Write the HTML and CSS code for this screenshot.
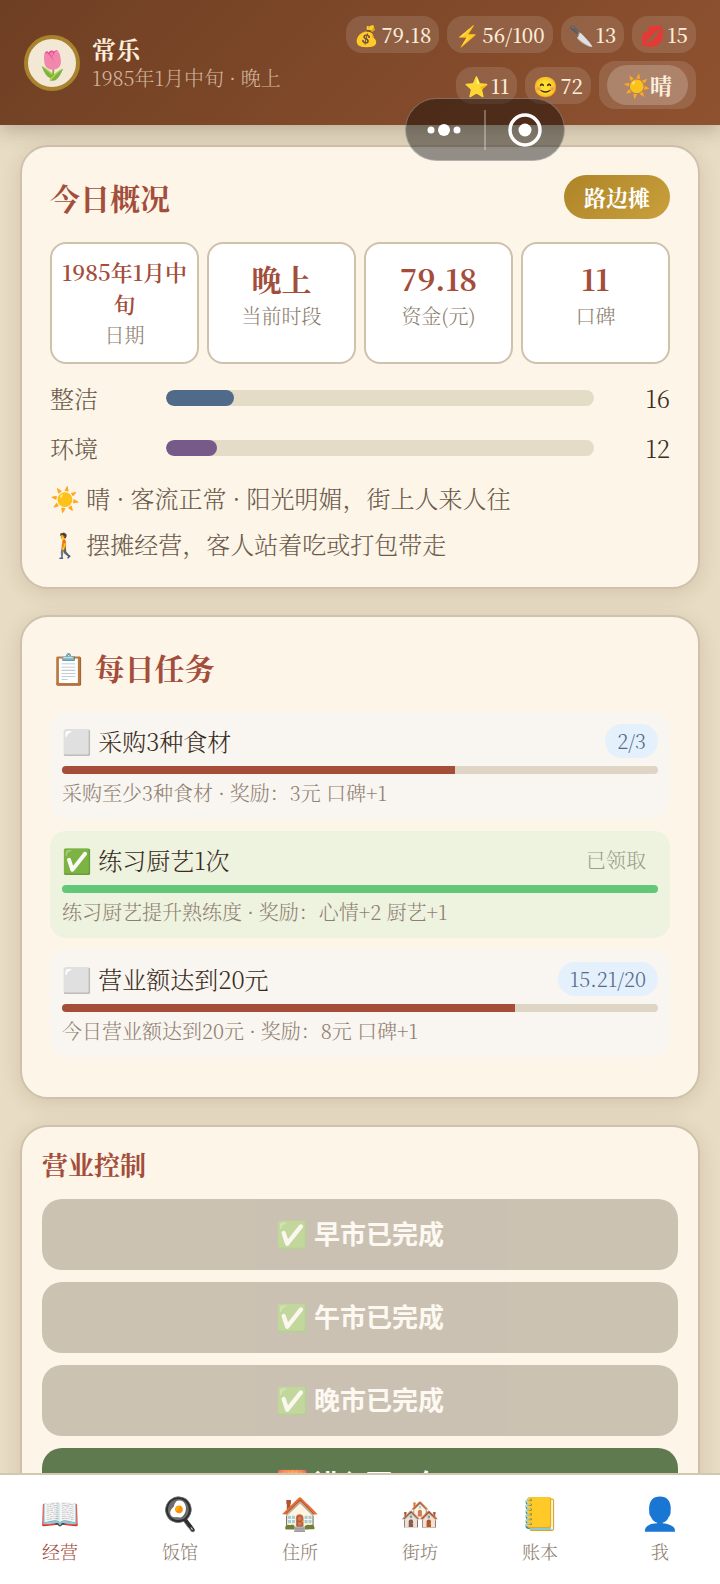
FILE: index.html
```html
<!DOCTYPE html>
<html lang="zh-CN">
<head>
    <meta charset="UTF-8">
    <meta name="viewport" content="width=device-width, initial-scale=1.0">
    <title>今日概况</title>
    <link rel="stylesheet" href="styles.css">
</head>
<body>
    <div class="app">
        <header class="header">
            <div class="avatar">🌷</div>
            <div class="user">
                <div class="user-name">常乐</div>
                <div class="user-date">1985年1月中旬 · 晚上</div>
            </div>
            <div class="status">
                <span class="chip"><span class="icon">💰</span>79.18</span>
                <span class="chip"><span class="icon">⚡</span>56/100</span>
                <span class="chip"><span class="icon">🔪</span>13</span>
                <span class="chip"><span class="icon">💋</span>15</span>
                <span class="chip"><span class="icon">⭐</span>11</span>
                <span class="chip"><span class="icon">😊</span>72</span>
                <span class="chip weather"><span class="weather-tag"><span class="icon">☀️</span>晴</span></span>
            </div>
        </header>

        <main class="main">
            <section class="card">
                <div class="card-head">
                    <h2>今日概况</h2>
                    <span class="badge">路边摊</span>
                </div>
                <div class="stats">
                    <div class="stat">
                        <div class="stat-value small">1985年1月中旬</div>
                        <div class="stat-label">日期</div>
                    </div>
                    <div class="stat">
                        <div class="stat-value">晚上</div>
                        <div class="stat-label">当前时段</div>
                    </div>
                    <div class="stat">
                        <div class="stat-value">79.18</div>
                        <div class="stat-label">资金(元)</div>
                    </div>
                    <div class="stat">
                        <div class="stat-value">11</div>
                        <div class="stat-label">口碑</div>
                    </div>
                </div>
                <div class="meter">
                    <span class="meter-label">整洁</span>
                    <div class="meter-bar"><div class="meter-fill blue" style="width: 16%"></div></div>
                    <span class="meter-num">16</span>
                </div>
                <div class="meter">
                    <span class="meter-label">环境</span>
                    <div class="meter-bar"><div class="meter-fill purple" style="width: 12%"></div></div>
                    <span class="meter-num">12</span>
                </div>
                <p class="note">☀️ 晴 · 客流正常 · 阳光明媚，街上人来人往</p>
                <p class="note">🚶 摆摊经营，客人站着吃或打包带走</p>
            </section>

            <section class="card">
                <div class="card-head">
                    <h2>📋 每日任务</h2>
                </div>
                <div class="task">
                    <div class="task-row">
                        <span>⬜ 采购3种食材</span>
                        <span class="task-tag">2/3</span>
                    </div>
                    <div class="task-bar"><div class="task-fill" style="width: 66%"></div></div>
                    <div class="task-desc">采购至少3种食材 · 奖励：3元 口碑+1</div>
                </div>
                <div class="task done">
                    <div class="task-row">
                        <span>✅ 练习厨艺1次</span>
                        <span class="task-tag">已领取</span>
                    </div>
                    <div class="task-bar"><div class="task-fill" style="width: 100%"></div></div>
                    <div class="task-desc">练习厨艺提升熟练度 · 奖励：心情+2 厨艺+1</div>
                </div>
                <div class="task">
                    <div class="task-row">
                        <span>⬜ 营业额达到20元</span>
                        <span class="task-tag">15.21/20</span>
                    </div>
                    <div class="task-bar"><div class="task-fill" style="width: 76%"></div></div>
                    <div class="task-desc">今日营业额达到20元 · 奖励：8元 口碑+1</div>
                </div>
            </section>

            <section class="card control">
                <h3>营业控制</h3>
                <button class="btn" type="button" disabled>✅ 早市已完成</button>
                <button class="btn" type="button" disabled>✅ 午市已完成</button>
                <button class="btn" type="button" disabled>✅ 晚市已完成</button>
                <button class="btn next" type="button">🌅 进入下一旬</button>
            </section>
        </main>

        <nav class="tabbar">
            <a class="tab active" href="#"><span class="tab-icon">📖</span>经营</a>
            <a class="tab" href="#"><span class="tab-icon">🍳</span>饭馆</a>
            <a class="tab" href="#"><span class="tab-icon">🏠</span>住所</a>
            <a class="tab" href="#"><span class="tab-icon">🏘️</span>街坊</a>
            <a class="tab" href="#"><span class="tab-icon">📒</span>账本</a>
            <a class="tab" href="#"><span class="tab-icon">👤</span>我</a>
        </nav>

        <div class="capsule">
            <button type="button" aria-label="更多">
                <svg width="36" height="36" viewBox="0 0 36 36" fill="#fff">
                    <circle cx="4" cy="18" r="3.5"/>
                    <circle cx="17" cy="18" r="6"/>
                    <circle cx="30" cy="18" r="3.5"/>
                </svg>
            </button>
            <button type="button" aria-label="关闭">
                <svg width="36" height="36" viewBox="0 0 36 36">
                    <circle cx="18" cy="18" r="15" fill="none" stroke="#fff" stroke-width="3.5"/>
                    <circle cx="18" cy="18" r="6.5" fill="#fff"/>
                </svg>
            </button>
        </div>
    </div>
</body>
</html>
```
FILE: styles.css
```css
* {
    margin: 0;
    padding: 0;
    box-sizing: border-box;
}
body {
    font-family: "Noto Serif CJK SC", "Noto Serif SC", "Liberation Serif", "Noto Sans CJK SC", serif;
    font-size: 24px;
    font-weight: 300;
    color: #3a2c22;
    background: #e8dcc4;
}
.app {
    position: relative;
    display: flex;
    flex-direction: column;
    height: 100vh;
    overflow: hidden;
}

/* 顶部状态栏 */
.header {
    position: relative;
    z-index: 1;
    display: flex;
    align-items: center;
    padding: 16px 24px;
    background: linear-gradient(135deg, #6f3f23, #8f5230);
    box-shadow: 0 4px 20px rgba(60, 40, 20, 0.3);
    color: #fbeedb;
}
.avatar {
    display: flex;
    align-items: center;
    justify-content: center;
    width: 56px;
    height: 56px;
    border: 4px solid #a8822c;
    border-radius: 50%;
    background: #f3e8d6;
    font-size: 28px;
}
.user {
    margin-left: 12px;
    white-space: nowrap;
}
.user-name {
    font-weight: bold;
    line-height: 30px;
}
.user-date {
    font-size: 20px;
    line-height: 28px;
    color: #d3b59d;
}
.status {
    flex: 1;
    display: flex;
    flex-wrap: wrap;
    justify-content: flex-end;
    align-items: center;
    gap: 8px;
    margin-left: 20px;
}
.chip {
    display: flex;
    align-items: center;
    gap: 2px;
    padding: 2px 8px;
    border-radius: 16px;
    background: rgba(255, 255, 255, 0.12);
    font-size: 20px;
    font-weight: 500;
    line-height: 33px;
}
.weather {
    padding: 4px 8px;
}
.weather-tag {
    display: flex;
    align-items: center;
    padding: 0 16px;
    border-radius: 20px;
    background: rgba(255, 255, 255, 0.2);
    font-size: 22px;
    font-weight: bold;
    line-height: 40px;
}

/* 卡片 */
.main {
    flex: 1;
    min-height: 0;
    overflow: hidden;
    padding: 20px;
}
.card {
    margin-bottom: 26px;
    padding: 28px;
    border: 2px solid #cfc2ad;
    border-radius: 28px;
    background: #fcf5e8;
    box-shadow: 0 4px 20px rgba(90, 60, 20, 0.14);
}
.card-head {
    display: flex;
    justify-content: space-between;
    align-items: center;
    margin-bottom: 23px;
}
h2 {
    font-size: 30px;
    font-weight: bold;
    line-height: 44px;
    color: #a34d3a;
}
.badge {
    padding: 0 20px;
    border-radius: 22px;
    background: linear-gradient(135deg, #ae8428, #c9a03c);
    color: #fff;
    font-size: 22px;
    font-weight: bold;
    line-height: 44px;
}
.stats {
    display: grid;
    grid-template-columns: repeat(4, 1fr);
    gap: 8px;
    margin-bottom: 15px;
}
.stat {
    padding: 12px 8px;
    border: 2px solid #cfc2ad;
    border-radius: 16px;
    background: #fff;
    text-align: center;
}
.stat-value {
    font-size: 30px;
    font-weight: bold;
    line-height: 45px;
    color: #a34d3a;
}
.stat-value.small {
    font-size: 22px;
    font-weight: 600;
    line-height: 32px;
}
.stat-label {
    font-size: 20px;
    line-height: 30px;
    color: #8a7b6c;
}
.meter {
    display: flex;
    align-items: center;
    gap: 16px;
    margin-bottom: 12px;
    line-height: 38px;
}
.meter-label {
    width: 100px;
    color: #6b5a4b;
}
.meter-bar {
    flex: 1;
    height: 16px;
    border-radius: 8px;
    background: #e5dcc8;
    overflow: hidden;
}
.meter-fill {
    height: 100%;
    border-radius: 8px;
}
.blue {
    background: #506b8a;
}
.purple {
    background: #765b8a;
}
.meter-num {
    width: 60px;
    text-align: right;
}
.note {
    margin-top: 16px;
    line-height: 30px;
    color: #6b5a4b;
}

/* 每日任务 */
.task {
    margin-bottom: 12px;
    padding: 12px;
    border-radius: 16px;
    background: #f9f5f0;
}
.task.done {
    background: #eef3e0;
}
.task-row {
    display: flex;
    justify-content: space-between;
    align-items: center;
    height: 34px;
    line-height: 34px;
}
.task-tag {
    padding: 0 12px;
    border-radius: 17px;
    background: #e4f1fd;
    color: #566a88;
    font-size: 20px;
}
.done .task-tag {
    background: none;
    color: #9a9c8c;
}
.task-bar {
    height: 8px;
    margin: 8px 0 4px;
    border-radius: 4px;
    background: #ded5c5;
    overflow: hidden;
}
.task-fill {
    height: 100%;
    background: #a64d39;
}
.done .task-fill {
    background: #62c878;
}
.task-desc {
    font-size: 20px;
    line-height: 29px;
    color: #8f7f70;
}

/* 营业控制 */
.control {
    display: flex;
    flex-direction: column;
    gap: 12px;
    padding: 20px;
}
h3 {
    margin-bottom: 6px;
    font-size: 26px;
    font-weight: bold;
    line-height: 34px;
    color: #a34d3a;
}
.btn {
    height: 71px;
    padding-bottom: 4px;
    border: none;
    border-radius: 20px;
    background: #5f7a4e;
    color: #fff;
    font-family: "Noto Sans CJK SC", sans-serif;
    font-size: 26px;
    font-weight: bold;
}
.btn:disabled {
    background: #918472;
    opacity: 0.45;
}

/* 底部导航 */
.tabbar {
    position: relative;
    z-index: 1;
    display: flex;
    height: 111px;
    padding-top: 12px;
    border-top: 2px solid #d3c7b0;
    background: #fff;
}
.tab {
    flex: 1;
    display: flex;
    flex-direction: column;
    align-items: center;
    font-size: 18px;
    line-height: 32px;
    color: #8a7b6c;
    text-decoration: none;
}
.tab.active {
    color: #a34d3a;
}
.tab-icon {
    font-size: 32px;
    line-height: 48px;
}

/* 悬浮胶囊按钮 */
.capsule {
    position: absolute;
    z-index: 2;
    top: 98px;
    right: 155px;
    display: flex;
    align-items: center;
    width: 160px;
    height: 63px;
    border: 1px solid rgba(255, 255, 255, 0.3);
    border-radius: 32px;
    background: rgba(0, 0, 0, 0.42);
}
.capsule button {
    flex: 1;
    display: flex;
    align-items: center;
    justify-content: center;
    height: 40px;
    border: none;
    background: none;
}
.capsule button + button {
    border-left: 2px solid rgba(255, 255, 255, 0.3);
}
```
